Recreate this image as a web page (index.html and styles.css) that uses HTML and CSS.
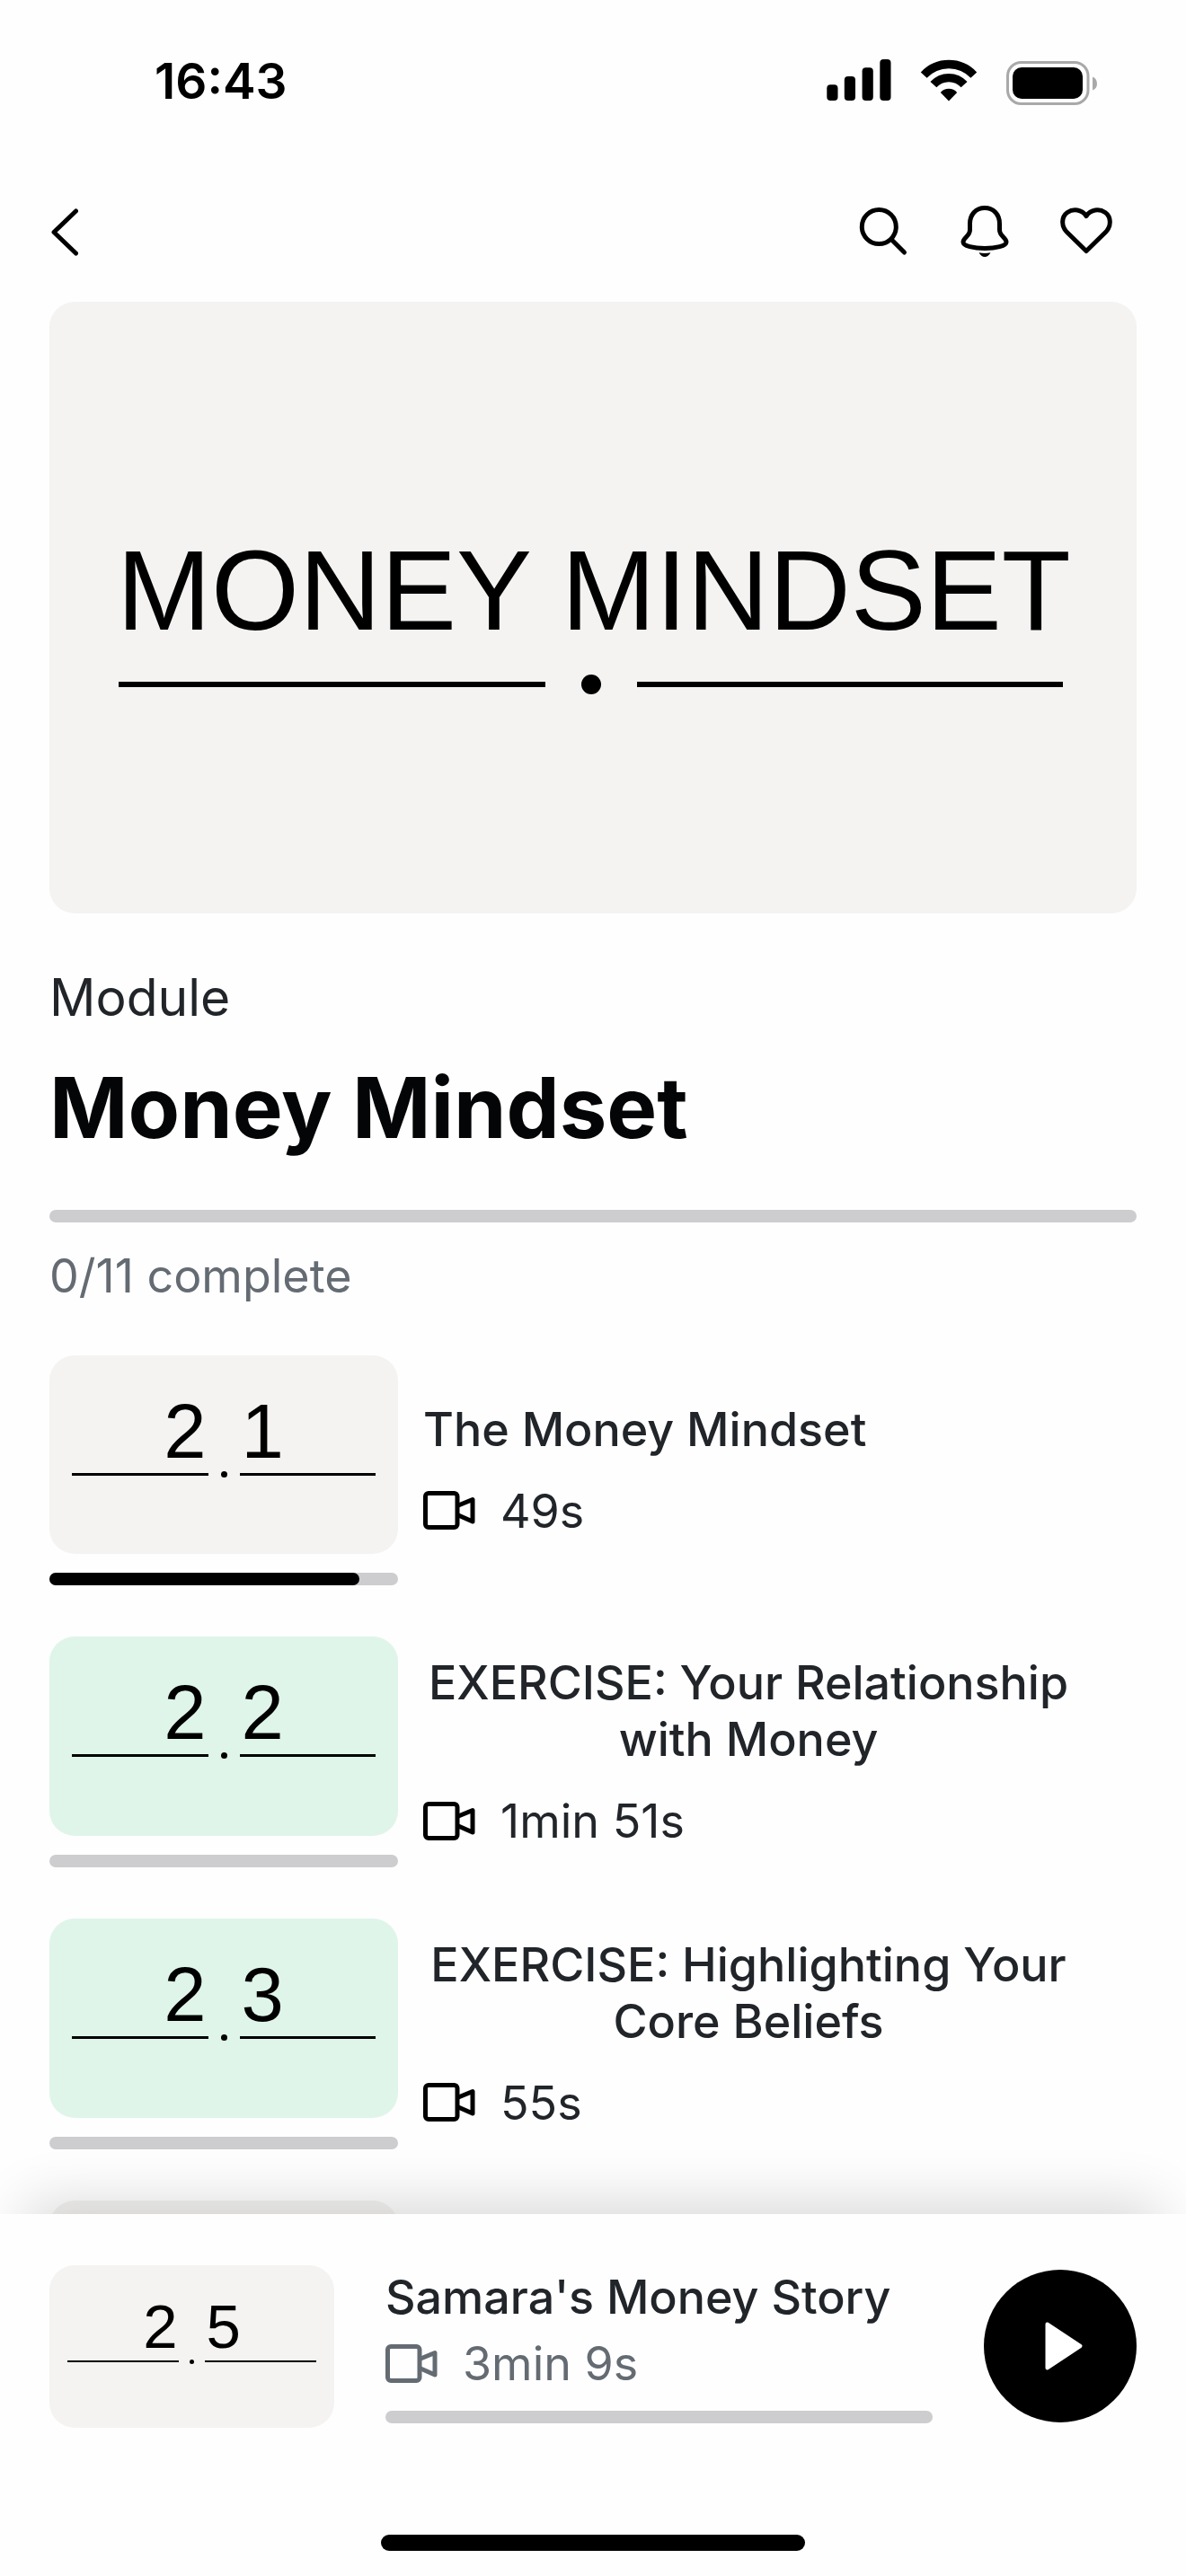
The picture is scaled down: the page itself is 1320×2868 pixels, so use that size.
FILE: index.html
```html
<!DOCTYPE html>
<html lang="en">
<head>
  <meta charset="UTF-8" />
  <meta name="viewport" content="width=device-width, initial-scale=1" />
  <title>Money Mindset</title>
  <link rel="stylesheet" href="styles.css">
</head>
<body>
  <!-- Shared icon -->
  <svg class="sprite" aria-hidden="true">
    <symbol id="video" viewBox="0 0 58 44">
      <rect x="2.5" y="2.5" width="35.5" height="38" rx="3.5" />
      <path d="M38 16.5 L55 9.5 V34 L38 26.5" />
    </symbol>
  </svg>

  <div class="status">
    <span class="time">16:43</span>
    <div class="status-icons">
      <svg width="72" height="56" viewBox="0 0 72 56" aria-hidden="true">
        <rect x="0.3" y="32.3" width="12.2" height="17.7" rx="4" />
        <rect x="19.8" y="23" width="12.2" height="27" rx="4" />
        <rect x="39.6" y="13.3" width="12.2" height="36.7" rx="4" />
        <rect x="59.3" y="4" width="12.2" height="46" rx="4" />
      </svg>
      <svg class="wifi" width="66" height="56" viewBox="0 -4 66 56" aria-hidden="true">
        <path class="arc" d="M5.2 17.6 A38 38 0 0 1 60.8 17.6" />
        <path class="arc" d="M15.9 28.2 A23 23 0 0 1 50.1 28.2" />
        <path d="M33 46.5 L23.8 36.9 A12.5 12.5 0 0 1 42.2 36.9 Z" />
      </svg>
      <svg width="101" height="56" viewBox="0 0 101 56" aria-hidden="true">
        <rect x="1.5" y="7.5" width="89.5" height="46" rx="15" fill="none" stroke="#a9a9a9" stroke-width="3" />
        <rect x="7" y="13" width="78" height="35" rx="10" />
        <path d="M96 23.5 Q101 25.5 101 31 Q101 36.5 96 38.5 Z" fill="#a9a9a9" />
      </svg>
    </div>
  </div>

  <header class="topbar">
    <button class="icon-btn back" aria-label="Back">
      <svg width="32" height="60" viewBox="0 0 32 60" aria-hidden="true">
        <path d="M29.5 7 L5 30.5 L29.5 54" />
      </svg>
    </button>
    <button class="icon-btn" aria-label="Search">
      <svg width="60" height="60" viewBox="0 0 60 60" aria-hidden="true">
        <circle cx="25.3" cy="24.5" r="19" />
        <path d="M39 38.5 L53.5 53" />
      </svg>
    </button>
    <button class="icon-btn" aria-label="Notifications">
      <svg width="60" height="60" viewBox="0 0 60 60" aria-hidden="true">
        <path d="M30 3.5 C20 3.5 13.5 11 13.5 21 V28 C13.5 35 6 36.5 6 41.5 C6 46 18 48.5 30 48.5 C42 48.5 54 46 54 41.5 C54 36.5 46.5 35 46.5 28 V21 C46.5 11 40 3.5 30 3.5 Z" />
        <path class="solid" d="M23.5 53.3 Q30 54.5 36.5 53.3 Q34 58 30 58 Q26 58 23.5 53.3 Z" />
      </svg>
    </button>
    <button class="icon-btn" aria-label="Favourite">
      <svg width="60" height="60" viewBox="0 0 60 60" aria-hidden="true">
        <path d="M30 51.5 L8.5 30.5 C1.5 23.5 2.5 13 9 8.5 C15.5 4 25 5 30 12.5 C35 5 44.5 4 51 8.5 C57.5 13 58.5 23.5 51.5 30.5 Z" />
      </svg>
    </button>
  </header>

  <main class="content">
    <div class="hero">
      <div class="hero-title">MONEY MINDSET</div>
      <div class="rule"><span class="line"></span><span class="dot"></span><span class="line"></span></div>
    </div>

    <p class="kind">Module</p>
    <h1 class="title">Money Mindset</h1>
    <div class="bar"></div>
    <p class="complete">0/11 complete</p>

    <div class="lessons">
      <a class="lesson" href="#">
        <div class="cover">
          <div class="thumb">
            <div class="digits"><span>2</span><span>1</span></div>
            <div class="rule"><span class="line"></span><span class="dot"></span><span class="line"></span></div>
          </div>
          <div class="bar"><div class="fill" style="width: 89%"></div></div>
        </div>
        <div class="info">
          <div class="name">The Money Mindset</div>
          <div class="duration"><svg class="video"><use href="#video" /></svg>49s</div>
        </div>
      </a>

      <a class="lesson" href="#">
        <div class="cover">
          <div class="thumb exercise">
            <div class="digits"><span>2</span><span>2</span></div>
            <div class="rule"><span class="line"></span><span class="dot"></span><span class="line"></span></div>
          </div>
          <div class="bar"></div>
        </div>
        <div class="info">
          <div class="name">EXERCISE: Your Relationship with Money</div>
          <div class="duration"><svg class="video"><use href="#video" /></svg>1min 51s</div>
        </div>
      </a>

      <a class="lesson" href="#">
        <div class="cover">
          <div class="thumb exercise">
            <div class="digits"><span>2</span><span>3</span></div>
            <div class="rule"><span class="line"></span><span class="dot"></span><span class="line"></span></div>
          </div>
          <div class="bar"></div>
        </div>
        <div class="info">
          <div class="name">EXERCISE: Highlighting Your Core Beliefs</div>
          <div class="duration"><svg class="video"><use href="#video" /></svg>55s</div>
        </div>
      </a>

      <div class="lesson">
        <div class="cover">
          <div class="thumb"></div>
        </div>
      </div>
    </div>
  </main>

  <!-- Up next -->
  <footer class="player">
    <div class="player-row">
      <div class="thumb small">
        <div class="digits"><span>2</span><span>5</span></div>
        <div class="rule"><span class="line"></span><span class="dot"></span><span class="line"></span></div>
      </div>
      <div class="player-info">
        <div class="name">Samara's Money Story</div>
        <div class="duration muted"><svg class="video"><use href="#video" /></svg>3min 9s</div>
        <div class="bar"></div>
      </div>
      <button class="play" aria-label="Play">
        <svg width="44" height="56" viewBox="0 0 44 56" aria-hidden="true">
          <path d="M3.5 3.5 L40.5 28 L3.5 52.5 Z" />
        </svg>
      </button>
    </div>
    <div class="home"></div>
  </footer>
</body>
</html>
```

FILE: styles.css
```css
* {
  box-sizing: border-box;
}

body {
  margin: 0;
  height: 100vh;
  display: flex;
  flex-direction: column;
  overflow: hidden;
  background: #fefefe;
  color: #212529;
  font-family: Inter, "Liberation Sans", sans-serif;
  font-size: 52px;
  line-height: 63px;
}

p, h1 {
  margin: 0;
}

button {
  border: none;
  padding: 0;
  background: none;
  cursor: pointer;
}

svg {
  display: block;
}

.sprite {
  display: none;
}

/* Status bar */
.status {
  flex: none;
  height: 180px;
  padding: 0 99px 0 172px;
  display: flex;
  align-items: center;
  justify-content: space-between;
  color: #000;
}

.time {
  font-size: 55px;
  font-weight: 600;
}

.status-icons {
  display: flex;
  gap: 31px;
}

.wifi .arc {
  fill: none;
  stroke: #000;
  stroke-width: 9.3;
}

/* Top bar */
.topbar {
  flex: none;
  height: 156px;
  padding: 0 81px 0 55px;
  display: flex;
  align-items: center;
  gap: 53px;
}

.back {
  margin-right: auto;
}

.icon-btn svg {
  fill: none;
  stroke: #000;
  stroke-width: 5;
  stroke-linecap: round;
  stroke-linejoin: round;
}

.icon-btn .solid {
  fill: #000;
  stroke: none;
}

/* Scrolling content */
.content {
  flex: 1;
  min-height: 0;
  padding: 0 55px;
  overflow: hidden;
}

.hero {
  aspect-ratio: 16 / 9;
  padding: 258px 65px 0 75px;
  border-radius: 28px;
  background: #f4f3f1;
  color: #000;
}

.hero-title {
  font-family: "Liberation Sans", Arial, sans-serif;
  font-size: 126px;
  line-height: 127px;
  white-space: nowrap;
}

.rule {
  display: flex;
  align-items: center;
}

.line {
  flex: 1;
  background: #000;
}

.dot {
  border-radius: 50%;
  background: #000;
}

.hero .rule {
  margin: 30px 17px 0 2px;
  gap: 40px;
}

.hero .line {
  height: 6px;
}

.hero .dot {
  width: 22px;
  height: 22px;
}

.kind {
  margin-top: 58px;
  font-size: 57px;
  line-height: 72px;
}

.title {
  margin: 28px 0 56px;
  color: #040506;
  font-size: 94px;
  line-height: 116px;
  font-weight: 700;
}

.bar {
  height: 14px;
  border-radius: 7px;
  background: #cdcdcf;
}

.fill {
  height: 100%;
  border-radius: 7px;
  background: #000;
}

.complete {
  margin: 28px 0 57px;
  color: #646b72;
}

/* Lessons */
.lessons {
  display: flex;
  flex-direction: column;
  gap: 57px;
}

.lesson {
  display: grid;
  grid-template-columns: 388px 1fr;
  align-items: center;
  gap: 28px;
  color: inherit;
  text-decoration: none;
}

.cover {
  display: flex;
  flex-direction: column;
  gap: 21px;
}

.thumb {
  aspect-ratio: 7 / 4;
  padding: 42px 25px 0;
  border-radius: 28px;
  background: #f4f3f1;
  color: #000;
}

.exercise {
  background: #dff5e9;
}

.digits {
  display: flex;
  justify-content: center;
  gap: 39px;
  font-family: "Liberation Sans", Arial, sans-serif;
  font-size: 85px;
  line-height: 85px;
}

.thumb .rule {
  margin-top: 2px;
  gap: 14px;
}

.thumb .line {
  height: 3px;
}

.thumb .dot {
  width: 7px;
  height: 7px;
}

.info {
  display: flex;
  flex-direction: column;
  align-items: flex-start;
  gap: 28px;
  padding-right: 70px;
}

.name {
  font-weight: 500;
  text-align: center;
}

.duration {
  display: flex;
  align-items: center;
  gap: 28px;
}

.video {
  width: 58px;
  height: 44px;
  fill: none;
  stroke: #000;
  stroke-width: 5;
  stroke-linejoin: round;
}

.muted {
  color: #646b72;
}

.muted .video {
  stroke: #646b72;
}

/* Player */
.player {
  position: relative;
  flex: none;
  padding: 57px 55px 28px;
  background: #fefefe;
  box-shadow: 0 -40px 60px -30px rgba(0, 0, 0, 0.16);
}

.player-row {
  display: grid;
  grid-template-columns: 317px 1fr 170px;
  align-items: center;
  gap: 57px;
}

.small {
  padding: 34px 20px 0;
}

.small .digits {
  gap: 32px;
  font-size: 69px;
  line-height: 69px;
}

.small .rule {
  gap: 12px;
}

.small .line {
  height: 2px;
}

.small .dot {
  width: 5px;
  height: 5px;
}

.player-info .name {
  margin-bottom: 11px;
  text-align: left;
}

.player-info .bar {
  margin-top: 21px;
}

.play {
  width: 170px;
  height: 170px;
  display: flex;
  align-items: center;
  justify-content: center;
  padding-left: 8px;
  border-radius: 50%;
  background: #000;
}

.play svg {
  fill: #fff;
  stroke: #fff;
  stroke-width: 4;
  stroke-linejoin: round;
}

.home {
  width: 39%;
  height: 18px;
  margin: 119px auto 0;
  border-radius: 9px;
  background: #000;
}
```
